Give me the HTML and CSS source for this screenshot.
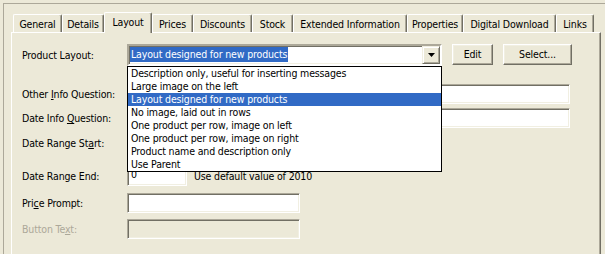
FILE: index.html
```html
<!DOCTYPE html>
<html>
<head>
<meta charset="utf-8">
<link rel="stylesheet" href="styles.css">
</head>
<body>
<div class="window">
  <div class="frame">
    <div class="tabs">
      <div class="tab t-general">General</div>
      <div class="tab t-details">Details</div>
      <div class="tab tab-active t-layout">Layout</div>
      <div class="tab t-prices">Prices</div>
      <div class="tab t-discounts">Discounts</div>
      <div class="tab t-stock">Stock</div>
      <div class="tab t-extended">Extended Information</div>
      <div class="tab t-properties">Properties</div>
      <div class="tab t-digital">Digital Download</div>
      <div class="tab t-links">Links</div>
    </div>
    <div class="page">
      <div class="row row-layout">
        <div class="lbl">Product Layout:</div>
        <div class="combo-wrap">
          <div class="combo">
            <span class="combo-val">Layout designed for new products</span>
            <span class="combo-btn"><svg width="7" height="4" viewBox="0 0 7 4"><path d="M0 0h7L3.5 4z" fill="#000"/></svg></span>
          </div>
          <ul class="dropdown">
            <li>Description only, useful for inserting messages</li>
            <li>Large image on the left</li>
            <li class="sel">Layout designed for new products</li>
            <li>No image, laid out in rows</li>
            <li>One product per row, image on left</li>
            <li>One product per row, image on right</li>
            <li>Product name and description only</li>
            <li>Use Parent</li>
          </ul>
        </div>
        <div class="btn btn-edit">Edit</div>
        <div class="btn btn-select">Select...</div>
      </div>
      <div class="row row-other">
        <div class="lbl">Other <u>I</u>nfo Question:</div>
        <div class="field field-wide"></div>
      </div>
      <div class="row row-dinfo">
        <div class="lbl">Date Info <u>Q</u>uestion:</div>
        <div class="field field-wide"></div>
      </div>
      <div class="row row-dstart">
        <div class="lbl">Date Range St<u>a</u>rt:</div>
        <div class="field field-short"></div>
      </div>
      <div class="row row-dend">
        <div class="lbl">Date Range End:</div>
        <div class="field field-short">0</div>
        <div class="hint">Use default value of 2010</div>
      </div>
      <div class="row row-price">
        <div class="lbl">Pri<u>c</u>e Prompt:</div>
        <div class="field field-mid"></div>
      </div>
      <div class="row row-btext">
        <div class="lbl lbl-disabled">Button Te<u>x</u>t:</div>
        <div class="field field-mid field-disabled"></div>
      </div>
    </div>
  </div>
</div>
</body>
</html>
```

FILE: styles.css
```css
* { box-sizing: border-box; }
html, body {
  margin: 0;
  padding: 0;
  background: #ECE9D8;
  overflow: hidden;
}
body {
  font-family: "DejaVu Sans Condensed", "Liberation Sans", sans-serif;
  font-size: 10.5px;
  letter-spacing: -0.15px;
  color: #000;
}
.window {
  height: 254px;
  padding: 3px 0 0 3px;
}
.frame {
  height: 100%;
  display: flex;
  flex-direction: column;
  border-top: 1px solid #ACA899;
  border-left: 1px solid #ACA899;
  padding: 8px 0 0 7px;
}
.tabs {
  display: flex;
  align-items: flex-end;
  flex: none;
  height: 20px;
  padding-left: 2px;
  position: relative;
  z-index: 2;
}
.tab {
  height: 18px;
  line-height: 18px;
  text-align: center;
  white-space: nowrap;
  background: #ECE9D8;
  border-top: 1px solid #fff;
  border-left: 1px solid #fff;
  border-right: 1px solid #716F64;
  box-shadow: inset -1px 0 #ACA899;
  border-radius: 2px 2px 0 0;
}
.tab-active {
  height: 21px;
  margin-bottom: -1px;
  line-height: 18px;
  position: relative;
  z-index: 3;
}
.t-general { width: 49px; }
.t-details { width: 42px; }
.t-layout { width: 48px; }
.t-prices { width: 41px; }
.t-discounts { width: 59px; }
.t-stock { width: 41px; }
.t-extended { width: 114px; }
.t-properties { width: 56px; }
.t-digital { width: 93px; }
.t-links { width: 38px; }

.page {
  position: relative;
  z-index: 1;
  flex: 1;
  width: 590px;
  border-top: 1px solid #fff;
  border-left: 1px solid #fff;
  border-right: 1px solid #716F64;
  box-shadow: inset -1px 0 #ACA899;
  padding: 11px 0 0 10px;
}
.row {
  display: flex;
  align-items: center;
  height: 20px;
}
.row-layout { height: 22px; align-items: flex-start; }
.row-layout .lbl { line-height: 22px; }
.row-other { margin-top: 18px; }
.row-dinfo { margin-top: 4px; }
.row-dstart { margin-top: 5px; }
.row-dend { margin-top: 13px; }
.row-price { margin-top: 7px; }
.row-btext { margin-top: 6px; }

.lbl {
  width: 105px;
  white-space: nowrap;
}
.lbl-disabled { color: #ACA899; }

.combo-wrap {
  position: relative;
  width: 315px;
  height: 22px;
}
.combo {
  display: flex;
  align-items: flex-start;
  justify-content: space-between;
  height: 22px;
  background: #fff;
  border: 2px solid;
  border-color: #ACA899 #fff #fff #ACA899;
  box-shadow: inset 1px 1px #716F64, inset -1px -1px #F1EFE2;
  padding: 1px 0 0 1px;
}
.combo-val {
  background: #316AC5;
  color: #fff;
  height: 15px;
  line-height: 15px;
  padding: 0 1px;
  white-space: nowrap;
}
.combo-btn {
  width: 18px;
  height: 18px;
  margin-top: -1px;
  display: flex;
  align-items: center;
  justify-content: center;
  background: #ECE9D8;
  border: 1px solid;
  border-color: #F1EFE2 #716F64 #716F64 #F1EFE2;
  box-shadow: inset 1px 1px #fff, inset -1px -1px #ACA899;
}
.dropdown {
  position: absolute;
  top: 100%;
  left: 0;
  width: 315px;
  margin: 0;
  padding: 0;
  list-style: none;
  background: #fff;
  border: 1px solid #000;
  z-index: 10;
}
.dropdown li {
  height: 13px;
  line-height: 13px;
  padding-left: 3px;
  white-space: nowrap;
}
.dropdown li.sel {
  background: #316AC5;
  color: #fff;
}
.btn {
  height: 21px;
  line-height: 19px;
  text-align: center;
  background: #ECE9D8;
  border: 1px solid;
  border-color: #fff #716F64 #716F64 #fff;
  box-shadow: inset -1px -1px #ACA899, inset 1px 1px #F1EFE2;
}
.btn-edit { width: 41px; margin-left: 10px; }
.btn-select { width: 69px; margin-left: 10px; }

.field {
  height: 20px;
  background: #fff;
  border: 1px solid;
  border-color: #ACA899 #fff #fff #ACA899;
  box-shadow: inset 1px 1px #716F64, inset -1px -1px #F1EFE2;
  padding: 1px 0 0 3px;
  line-height: 13px;
}
.field-wide { width: 443px; }
.field-short { width: 60px; }
.field-mid { width: 173px; }
.field-disabled { background: #ECE9D8; }
.hint {
  margin-left: 7px;
  white-space: nowrap;
}
```
